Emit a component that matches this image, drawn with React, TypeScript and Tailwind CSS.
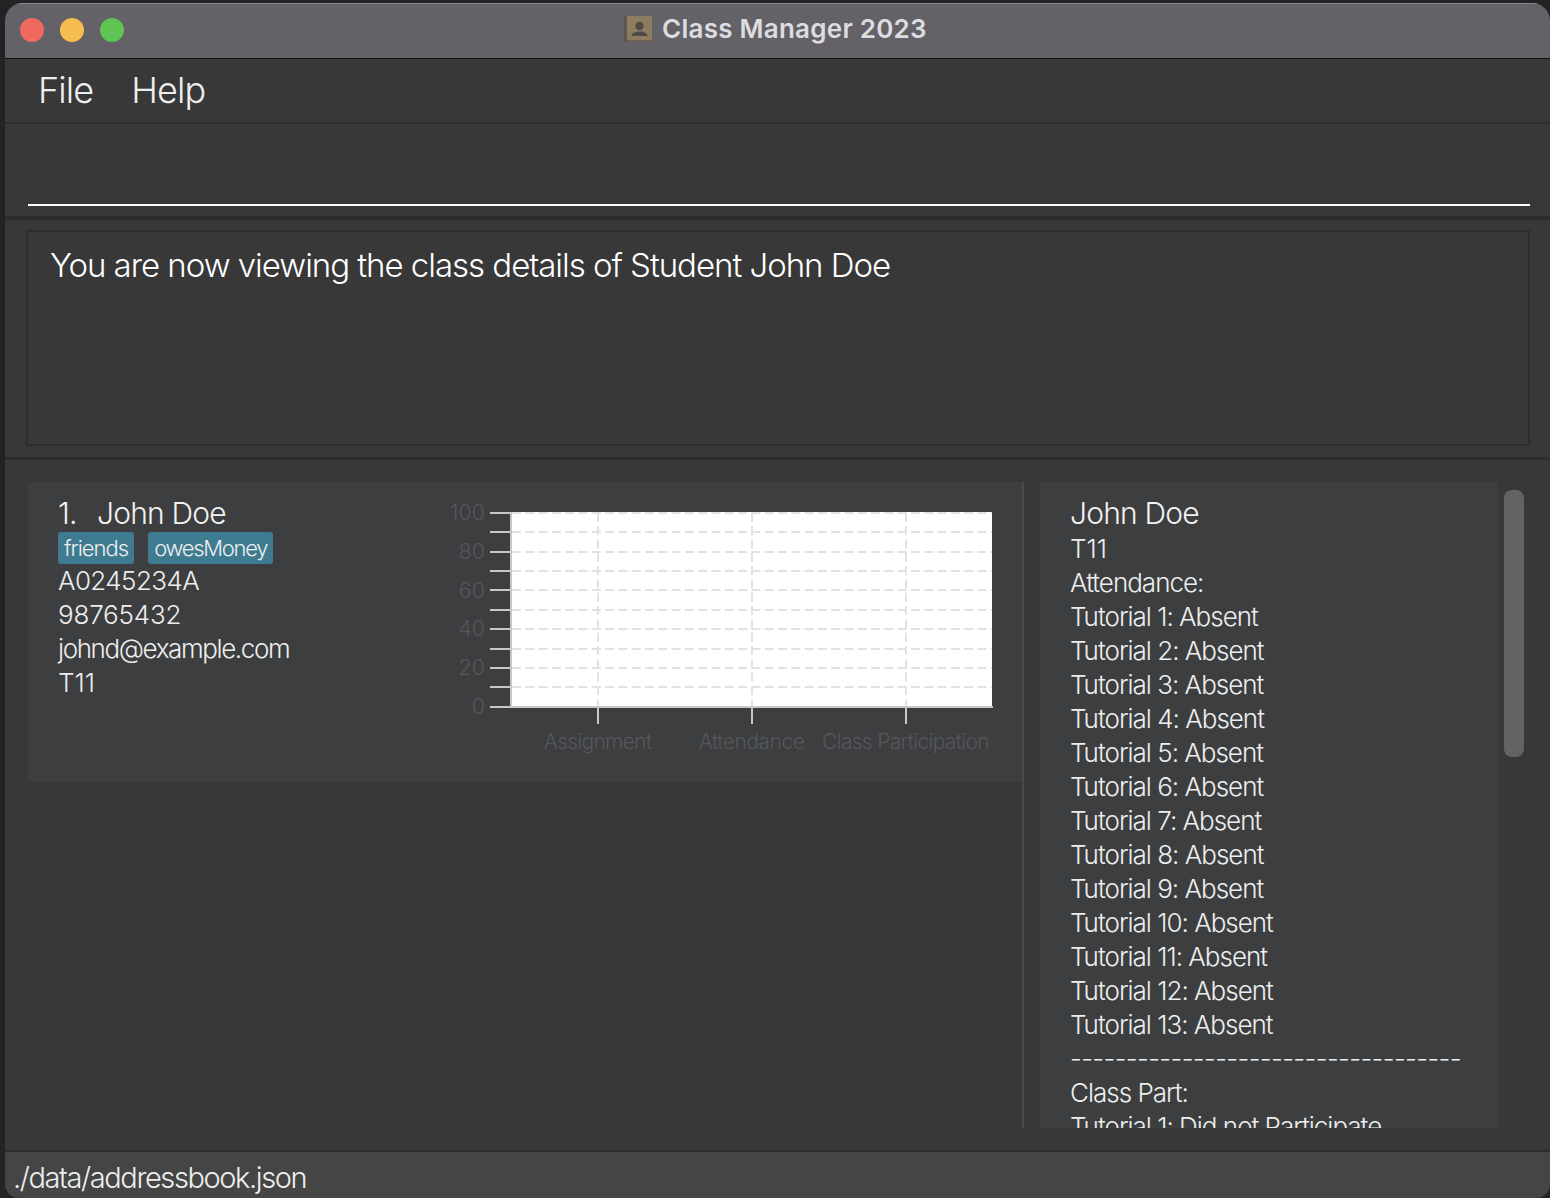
const font = { fontFamily: 'Inter, "Liberation Sans", sans-serif' };

const tutorials = Array.from({ length: 13 }, (_, i) => `Tutorial ${i + 1}: Absent`);
const ticks = [513, 532, 552, 571, 590, 610, 629, 649, 668, 687, 707];

function Chart() {
  return (
    <svg width="570" height="280" viewBox="440 490 570 280" className="block">
      <rect x="511" y="512" width="481" height="195" fill="#ffffff" />
      {ticks.map((y) => (
        <line key={y} x1="512" x2="992" y1={y} y2={y} stroke="#e2e2e2" strokeWidth="2" strokeDasharray="9 4.3" />
      ))}
      {[598, 752, 906].map((x) => (
        <line key={x} x1={x} x2={x} y1="513" y2="707" stroke="#e2e2e2" strokeWidth="2" strokeDasharray="9 4.3" />
      ))}
      {ticks.map((y) => (
        <line key={y} x1="490" x2="511" y1={y} y2={y} stroke="#c8c8c8" strokeWidth="2" />
      ))}
      <line x1="511" x2="511" y1="512" y2="708" stroke="#c8c8c8" strokeWidth="2" />
      <line x1="510" x2="993" y1="707" y2="707" stroke="#c8c8c8" strokeWidth="2" />
      {[598, 752, 906].map((x) => (
        <line key={x} x1={x} x2={x} y1="707" y2="724" stroke="#c8c8c8" strokeWidth="2" />
      ))}
      {[100, 80, 60, 40, 20, 0].map((v, i) => (
        <text key={v} x="485" y={520 + i * 38.8} textAnchor="end" fontSize="21.5" fontWeight="300" fill="#55575a" style={font}>
          {v}
        </text>
      ))}
      <text x="597.5" y="749" textAnchor="middle" fontSize="21" fontWeight="300" fill="#55575a" letterSpacing="-0.75" style={font}>Assignment</text>
      <text x="751.5" y="749" textAnchor="middle" fontSize="21" fontWeight="300" fill="#55575a" letterSpacing="-0.5" style={font}>Attendance</text>
      <text x="905.5" y="749" textAnchor="middle" fontSize="21" fontWeight="300" fill="#55575a" letterSpacing="-0.7" style={font}>Class Participation</text>
    </svg>
  );
}

function AppIcon() {
  return (
    <svg width="28" height="26" viewBox="0 0 28 26" className="block">
      <rect x="0" y="0" width="4" height="26" fill="#5c5653" />
      <rect x="3" y="0" width="25" height="25" fill="#8d7d60" />
      <rect x="3" y="24" width="25" height="2" fill="#6d6250" />
      <circle cx="15.5" cy="10" r="4.2" fill="#4e4a47" />
      <path d="M7.5 20c0-3 3.5-3.6 5.5-4.6h5c2 1 5.5 1.6 5.5 4.6z" fill="#4e4a47" />
    </svg>
  );
}

export default function App() {
  return (
    <div className="w-[1550px] h-[1198px] overflow-hidden bg-[#232326] pt-[3px] pl-[5px]" style={font}>
      <div className="w-[1545px] h-[1195px] flex flex-col bg-[#383838] rounded-t-[18px] rounded-b-[14px] overflow-hidden">
        {/* Title bar */}
        <div className="h-[56px] shrink-0 flex items-center bg-[#646267] border-t border-t-[#8b8a8d] border-b border-b-[#111111] relative pl-[15px] pb-[2px] gap-[16px]">
          <div className="w-[24px] h-[24px] rounded-full bg-[#f1685e]" />
          <div className="w-[24px] h-[24px] rounded-full bg-[#f6bd4f]" />
          <div className="w-[24px] h-[24px] rounded-full bg-[#5fc454]" />
          <div className="absolute left-[619px] top-[10px] flex items-center gap-[10px]">
            <AppIcon />
            <span className="text-[26px] leading-[30px] font-semibold text-[#dddce0] tracking-[0.25px]">Class Manager 2023</span>
          </div>
        </div>

        {/* Menu */}
        <div className="h-[65px] shrink-0 flex items-center pl-[33px] gap-[38px] border-b-2 border-b-[#2d2d2d] pb-[1px]">
          <span className="text-[36px] leading-[44px] font-light text-[#eeeeee] tracking-[-0.9px]">File</span>
          <span className="text-[36px] leading-[44px] font-light text-[#eeeeee] tracking-[-0.9px]">Help</span>
        </div>

        {/* Command box */}
        <div className="h-[96px] shrink-0 flex flex-col justify-end border-b-4 border-b-[#2d2d2d] pb-[10px] pl-[23px] pr-[20px]">
          <div className="h-[2px] bg-white" />
        </div>

        {/* Result */}
        <div className="h-[240px] shrink-0 border-b-[3px] border-b-[#2d2d2d] pt-[10px] pb-[11px] pl-[21px] pr-[20px]">
          <div className="h-[216px] border-2 border-[#2d2d2d] pl-[22px] pt-[13px]">
            <p className="text-[33px] leading-[40px] font-light text-white tracking-[-1.03px] whitespace-nowrap">
              You are now viewing the class details of Student John Doe
            </p>
          </div>
        </div>

        {/* Lists */}
        <div className="flex-1 min-h-0 flex pt-[22px] pl-[23px]">
          <div className="w-[996px] h-[646px] shrink-0 border-r-2 border-r-[#4a4a4a]">
            <div className="h-[300px] bg-[#3c3e40] flex justify-between">
              <div className="pl-[30px] pt-[13px] text-[26px] leading-[34px] font-light text-[#eeeeee]">
                <div className="text-[30px] leading-[37px] text-[#f2f2f2] tracking-[-0.8px] whitespace-pre flex">
                  <span className="w-[39px]">1.</span>
                  <span>John Doe</span>
                </div>
                <div className="flex gap-[14px] h-[32px]">
                  <span className="bg-[#3e7b91] rounded-[3px] px-[6px] text-[22px] leading-[32px] text-[#eeeeee] tracking-[-1px]">friends</span>
                  <span className="bg-[#3e7b91] rounded-[3px] px-[6px] text-[22px] leading-[32px] text-[#eeeeee] tracking-[-1.3px]">owesMoney</span>
                </div>
                <div className="tracking-[-0.6px]">A0245234A</div>
                <div className="tracking-[-0.2px]">98765432</div>
                <div className="tracking-[-1.4px]">johnd@example.com</div>
                <div>T11</div>
              </div>
              <div className="pt-[8px] pr-[12px]">
                <Chart />
              </div>
            </div>
          </div>

          <div className="ml-[16px] w-[458px] h-[646px] shrink-0 bg-[#3c3e40] overflow-hidden pl-[30px] pt-[13px] text-[26px] leading-[34px] font-light text-[#eeeeee] tracking-[-1px] whitespace-nowrap">
            <div className="text-[30px] leading-[37px] text-[#f2f2f2] tracking-[-0.8px]">John Doe</div>
            <div className="tracking-[0px]">T11</div>
            <div>Attendance:</div>
            {tutorials.map((t) => (
              <div key={t}>{t}</div>
            ))}
            <div className="tracking-[-0.6px]">-----------------------------------</div>
            <div>Class Part:</div>
            <div>Tutorial 1: Did not Participate</div>
          </div>

          <div className="ml-[6px] mt-[8px] w-[20px] h-[267px] shrink-0 rounded-[8px] bg-[#636363]" />
        </div>

        {/* Status */}
        <div className="h-[48px] shrink-0 bg-[#454545] border-t-2 border-t-[#2d2d2d] pl-[8px] pt-[5px] flex items-center">
          <span className="text-[29px] leading-[40px] font-light text-[#eeeeee] tracking-[-1.4px]">./data/addressbook.json</span>
        </div>
      </div>
    </div>
  );
}
